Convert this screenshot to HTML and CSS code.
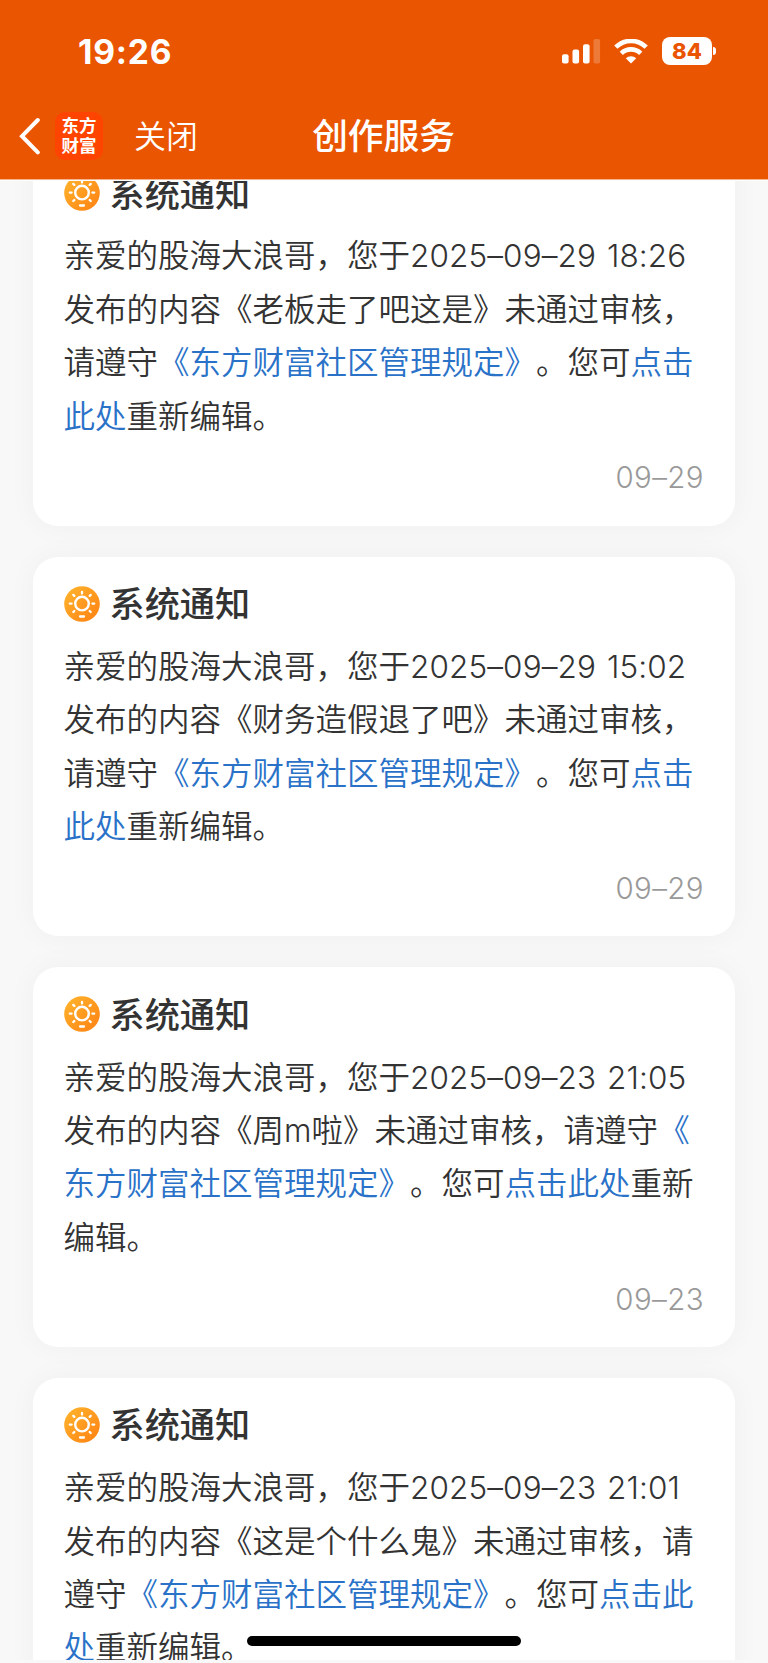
FILE: index.html
```html
<!DOCTYPE html>
<html lang="zh-CN">
<head>
  <meta charset="UTF-8" />
  <meta name="viewport" content="width=device-width, initial-scale=1.0" />
  <title>创作服务</title>
  <link rel="stylesheet" href="styles.css">
</head>
<body>
  <!-- shared icon -->
  <svg class="defs" width="0" height="0">
    <defs>
      <linearGradient id="sunFill" x1="0" y1="0" x2="1" y2="1">
        <stop offset="0" stop-color="#ffb62e" />
        <stop offset="1" stop-color="#ff8012" />
      </linearGradient>
      <symbol id="sun" viewBox="0 0 36 36">
        <circle cx="18" cy="18" r="17.8" fill="url(#sunFill)" />
        <circle cx="18" cy="17.6" r="6.8" fill="none" stroke="#fff" stroke-width="2.4" />
        <g stroke="#fff" stroke-width="2.3" stroke-linecap="round">
          <path d="M18 6v1.600M5.800 17.600h1.800M28.400 17.600h1.800M9.300 8.900l1 1M26.700 8.900l-1 1M9.300 26l1-1M26.700 26l-1-1M16 30.500h4" />
        </g>
      </symbol>
    </defs>
  </svg>

  <div class="screen">
    <header class="header">
      <div class="status-bar">
        <div class="clock">19:26</div>
        <div class="status-icons">
          <svg class="signal" width="39" height="25" viewBox="0 0 39 25" fill="#fff">
            <rect x="0" y="15.2" width="6.6" height="9.3" rx="2" />
            <rect x="10.5" y="10.4" width="6.6" height="14.1" rx="2" />
            <rect x="21" y="5.2" width="6.6" height="19.3" rx="2" />
            <rect x="31.5" y="0" width="6.6" height="24.5" rx="2" opacity="0.22" />
          </svg>
          <svg class="wifi" width="34" height="25" viewBox="0 0 34 25">
            <g fill="none" stroke="#fff" stroke-width="4.6">
              <path d="M1.8 8.2a21.6 21.6 0 0 1 30.4 0" />
              <path d="M7.3 14.3a13.9 13.9 0 0 1 19.4 0" />
            </g>
            <path d="M17 24.6l-5.2-5.3a7.6 7.6 0 0 1 10.4 0z" fill="#fff" />
          </svg>
          <div class="battery">
            <span class="battery-level">84</span>
            <span class="battery-cap"></span>
          </div>
        </div>
      </div>
      <nav class="nav">
        <svg class="back" width="22" height="38" viewBox="0 0 22 38">
          <path d="M19.800 3L4 19.200l15.800 16.200" fill="none" stroke="#fff" stroke-width="4" stroke-linecap="round" stroke-linejoin="miter" />
        </svg>
        <div class="app-logo"><span>东方</span><span>财富</span></div>
        <div class="close">关闭</div>
        <h1 class="nav-title">创作服务</h1>
      </nav>
    </header>

    <main class="list">
      <section class="card">
        <h2 class="card-title"><svg class="icon"><use href="#sun" /></svg><span>系统通知</span></h2>
        <p class="card-text">
          <span class="line">亲爱的股海大浪哥，您于<span class="num">2025–09–29 18:26</span></span>
          <span class="line">发布的内容《老板走了吧这是》未通过审核，</span>
          <span class="line">请遵守<a>《东方财富社区管理规定》</a>。您可<a>点击</a></span>
          <span class="line"><a>此处</a>重新编辑。</span>
        </p>
        <div class="card-date">09–29</div>
      </section>

      <section class="card">
        <h2 class="card-title"><svg class="icon"><use href="#sun" /></svg><span>系统通知</span></h2>
        <p class="card-text">
          <span class="line">亲爱的股海大浪哥，您于<span class="num">2025–09–29 15:02</span></span>
          <span class="line">发布的内容《财务造假退了吧》未通过审核，</span>
          <span class="line">请遵守<a>《东方财富社区管理规定》</a>。您可<a>点击</a></span>
          <span class="line"><a>此处</a>重新编辑。</span>
        </p>
        <div class="card-date">09–29</div>
      </section>

      <section class="card">
        <h2 class="card-title"><svg class="icon"><use href="#sun" /></svg><span>系统通知</span></h2>
        <p class="card-text">
          <span class="line">亲爱的股海大浪哥，您于<span class="num">2025–09–23 21:05</span></span>
          <span class="line">发布的内容《周<span class="num">m</span>啦》未通过审核，请遵守<a>《</a></span>
          <span class="line"><a>东方财富社区管理规定》</a>。您可<a>点击此处</a>重新</span>
          <span class="line">编辑。</span>
        </p>
        <div class="card-date">09–23</div>
      </section>

      <section class="card">
        <h2 class="card-title"><svg class="icon"><use href="#sun" /></svg><span>系统通知</span></h2>
        <p class="card-text">
          <span class="line">亲爱的股海大浪哥，您于<span class="num">2025–09–23 21:01</span></span>
          <span class="line">发布的内容《这是个什么鬼》未通过审核，请</span>
          <span class="line">遵守<a>《东方财富社区管理规定》</a>。您可<a>点击此</a></span>
          <span class="line"><a>处</a>重新编辑。</span>
        </p>
      </section>
    </main>
    <div class="home-indicator"></div>
  </div>
</body>
</html>
```
FILE: styles.css
```css
* { box-sizing: border-box; }
body {
  margin: 0;
  background: #f8f8f8;
  color: #333;
  font-family: "Noto Sans CJK SC", sans-serif;
  text-spacing-trim: space-all;
  text-autospace: no-autospace;
}
.defs { position: absolute; }
.screen {
  position: relative;
  display: flex;
  flex-direction: column;
  width: 768px;
  height: 1663px;
  padding-bottom: 3px;
  overflow: hidden;
}

/* Header */
.header {
  flex: none;
  height: 181px;
  background: linear-gradient(#ea5502 179px, #f6b48e 179px, #f6b48e 180px, #fdfdfd 180px);
  color: #fff;
}
.status-bar {
  display: flex;
  justify-content: space-between;
  align-items: center;
  height: 102px;
  padding: 0 52px 0 78px;
}
.clock {
  padding-top: 1px;
  font-family: Inter, sans-serif;
  font-size: 33.5px;
  font-weight: 750;
  letter-spacing: 0.8px;
}
.status-icons { display: flex; align-items: center; }
.wifi { margin-left: 13px; }
.battery { display: flex; align-items: center; margin-left: 14px; }
.battery-level {
  width: 50px;
  height: 28px;
  border-radius: 8px;
  background: #fff;
  color: #ea5502;
  font: 800 22px/28px Inter, sans-serif;
  text-align: center;
}
.battery-cap {
  width: 3px;
  height: 8px;
  margin-left: 1px;
  border-radius: 0 4px 4px 0;
  background: #fff;
}
.nav {
  position: relative;
  display: flex;
  align-items: center;
  height: 68px;
  padding-left: 18px;
}
.app-logo {
  display: flex;
  flex-direction: column;
  justify-content: center;
  width: 48px;
  height: 48px;
  margin-left: 15px;
  padding-bottom: 2px;
  border-radius: 10px;
  background: #ff4400;
  font-size: 17.5px;
  font-weight: 700;
  line-height: 20px;
  text-align: center;
}
.close {
  margin-left: 31px;
  padding-bottom: 4px;
  font-size: 32px;
  font-weight: 350;
  line-height: 48px;
}
.nav-title {
  position: absolute;
  left: 0;
  right: 1px;
  margin: 0;
  padding-bottom: 4px;
  font-size: 35.7px;
  font-weight: 500;
  line-height: 48px;
  text-align: center;
  pointer-events: none;
}

/* Notices, scrolled partly under the header */
.list {
  display: flex;
  flex: 1;
  flex-direction: column;
  gap: 31px;
  min-height: 0;
  padding: 0 33px;
  overflow: hidden;
}
.card {
  flex: none;
  height: 379.6px;
  padding: 24px 31px 0 30.5px;
  border-radius: 25px;
  background: #fff;
  box-shadow: 0 0 30px rgba(0, 0, 0, 0.04);
}
.card:first-child { margin-top: -35px; }
.card-title {
  display: flex;
  align-items: center;
  height: 46px;
  margin: 0;
  font-size: 35.2px;
  font-weight: 500;
}
.card-title span { padding-bottom: 4px; }
.icon { width: 36px; height: 36px; margin-right: 10px; }
.card-text {
  margin: 11.4px 0 0;
  font-size: 31.5px;
  font-weight: 350;
  line-height: 53.4px;
}
.line { display: block; height: 53.4px; white-space: nowrap; }
.card-text a { color: #2a72c8; }
.num {
  font-family: Inter, sans-serif;
  font-weight: 350;
  line-height: 1;
  letter-spacing: 0.1px;
  word-spacing: 2px;
}
.card-date {
  margin-top: 16.4px;
  color: #999;
  font: 350 29.5px/40px Inter, sans-serif;
  letter-spacing: 0.4px;
  text-align: right;
}

.home-indicator {
  position: absolute;
  left: 247px;
  bottom: 17px;
  width: 274px;
  height: 10px;
  border-radius: 5px;
  background: #000;
}
```
